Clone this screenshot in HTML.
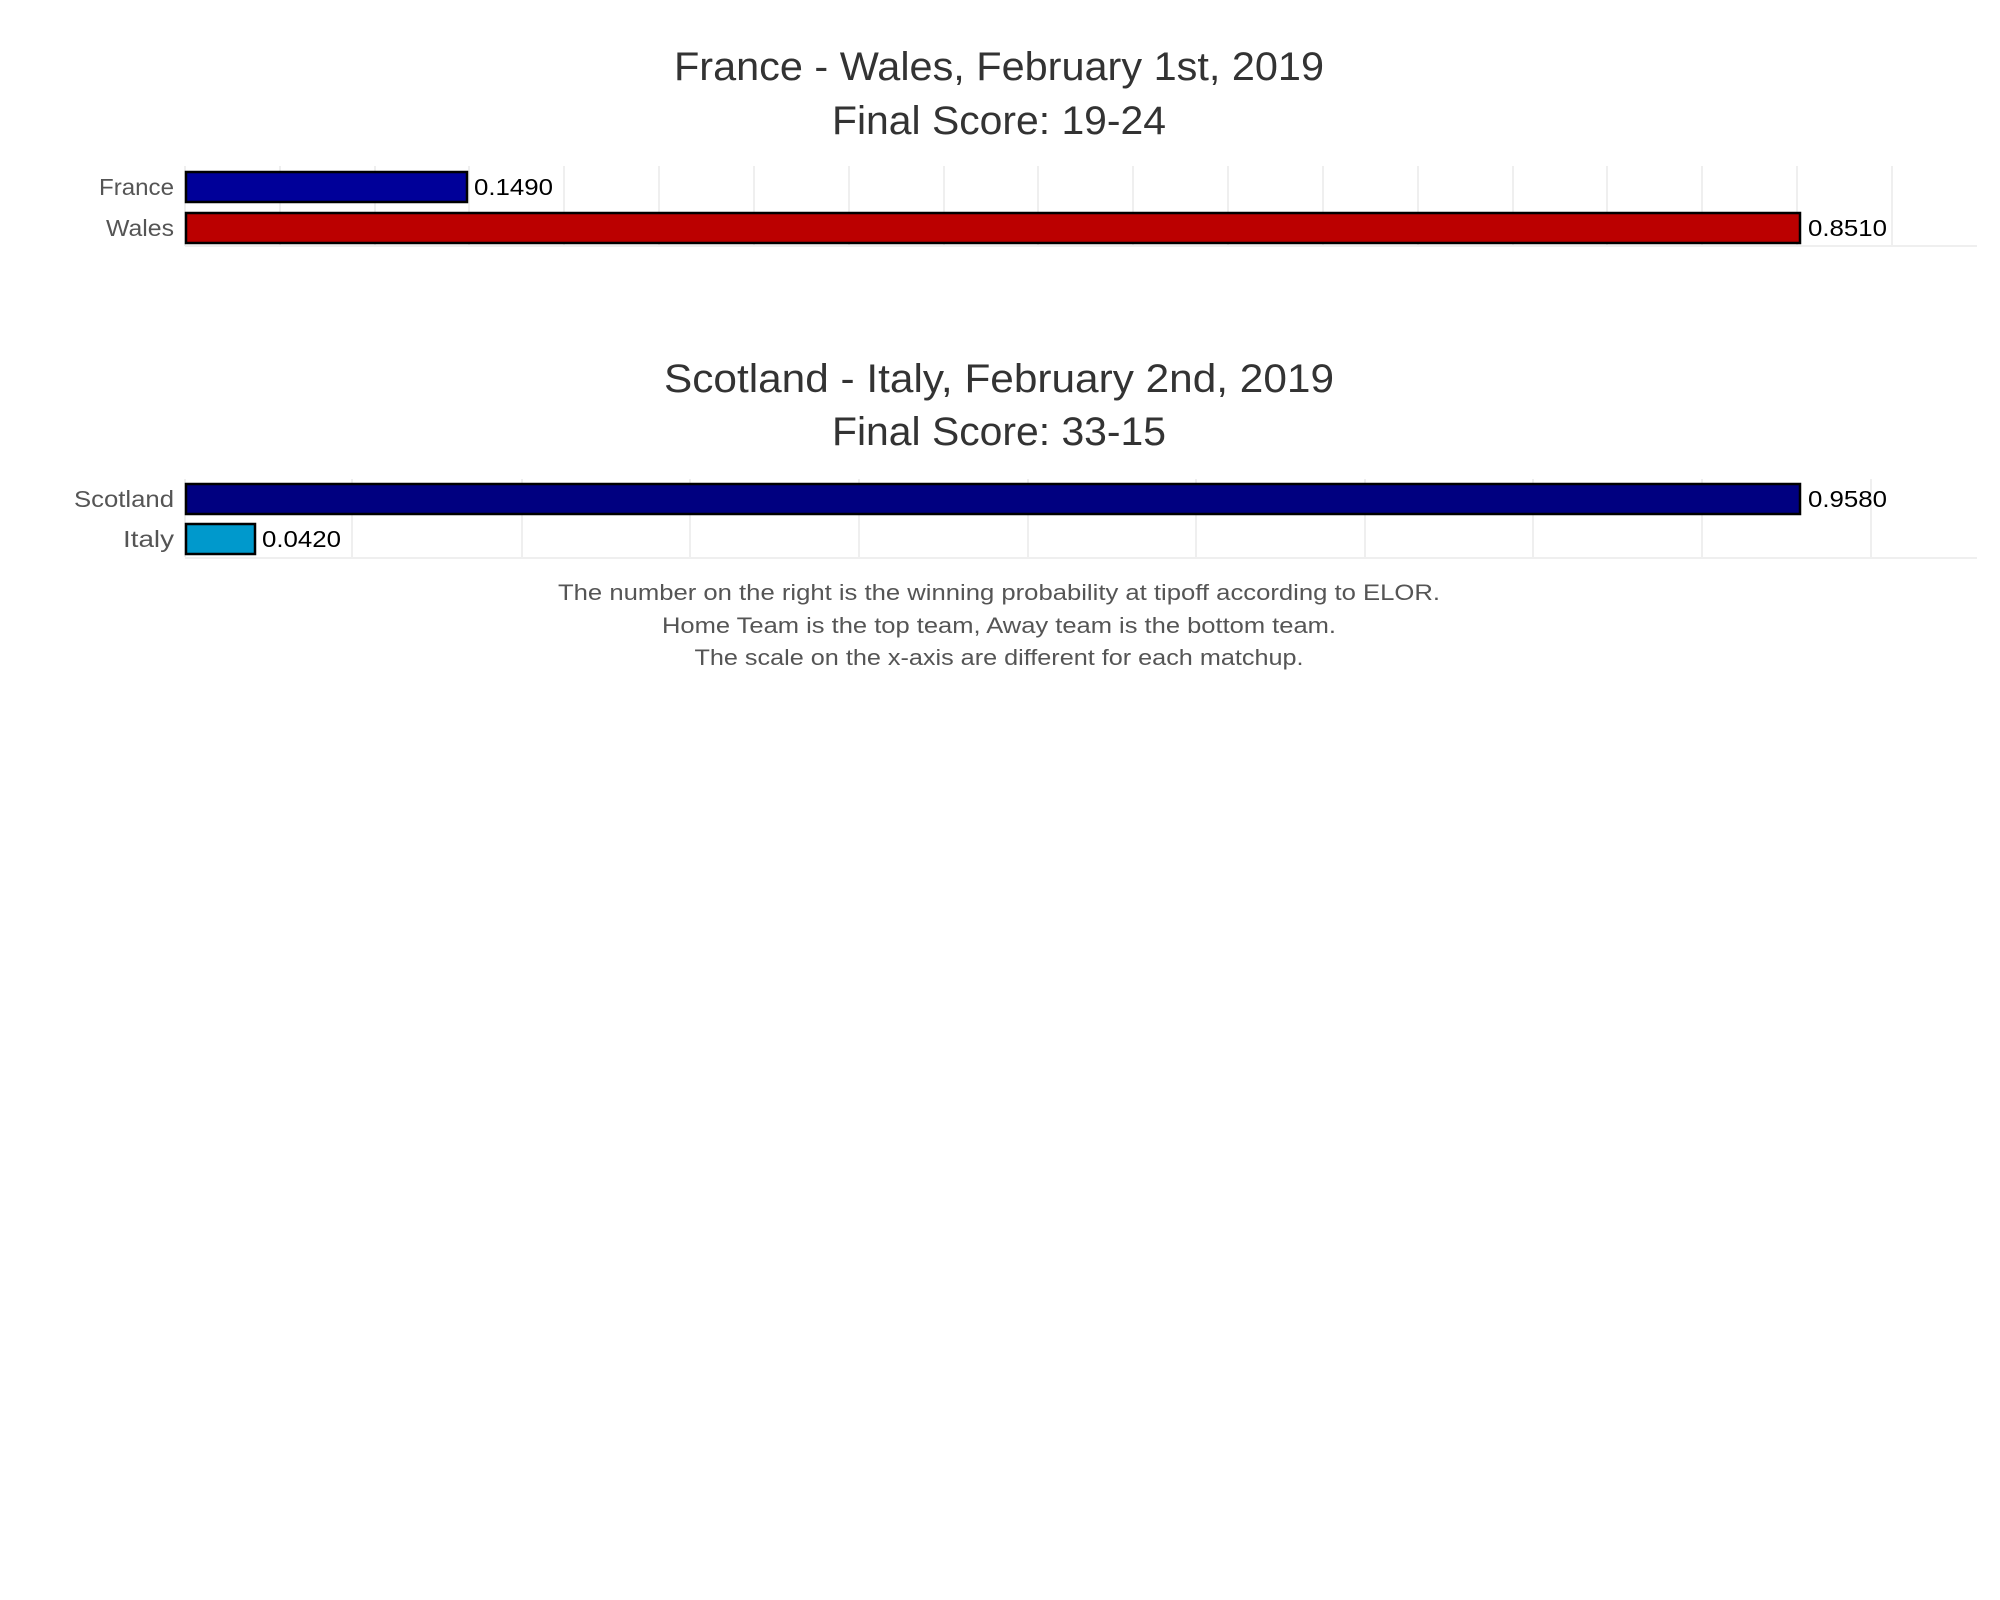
<!DOCTYPE html>
<html><head><meta charset="utf-8"><style>html,body{margin:0;padding:0;background:#fff}svg{display:block}</style></head>
<body>
<svg width="2000" height="1600" xmlns="http://www.w3.org/2000/svg" font-family="Liberation Sans, sans-serif">
<g fill="#333" font-size="40" text-anchor="middle">
<text x="999" y="80" textLength="650" lengthAdjust="spacingAndGlyphs">France - Wales, February 1st, 2019</text>
<text x="999" y="134" textLength="334" lengthAdjust="spacingAndGlyphs">Final Score: 19-24</text>
<text x="999" y="392" textLength="670" lengthAdjust="spacingAndGlyphs">Scotland - Italy, February 2nd, 2019</text>
<text x="999" y="445" textLength="334" lengthAdjust="spacingAndGlyphs">Final Score: 33-15</text>
</g>
<g stroke="#efefef" stroke-width="2">
<line x1="185" y1="166" x2="185" y2="246"/><line x1="280" y1="166" x2="280" y2="246"/><line x1="375" y1="166" x2="375" y2="246"/><line x1="469" y1="166" x2="469" y2="246"/><line x1="564" y1="166" x2="564" y2="246"/><line x1="659" y1="166" x2="659" y2="246"/><line x1="754" y1="166" x2="754" y2="246"/><line x1="849" y1="166" x2="849" y2="246"/><line x1="944" y1="166" x2="944" y2="246"/><line x1="1038" y1="166" x2="1038" y2="246"/><line x1="1133" y1="166" x2="1133" y2="246"/><line x1="1228" y1="166" x2="1228" y2="246"/><line x1="1323" y1="166" x2="1323" y2="246"/><line x1="1418" y1="166" x2="1418" y2="246"/><line x1="1513" y1="166" x2="1513" y2="246"/><line x1="1607" y1="166" x2="1607" y2="246"/><line x1="1702" y1="166" x2="1702" y2="246"/><line x1="1797" y1="166" x2="1797" y2="246"/><line x1="1892" y1="166" x2="1892" y2="246"/>
<line x1="185" y1="246" x2="1977" y2="246"/>
<line x1="185" y1="479" x2="185" y2="557"/><line x1="352" y1="479" x2="352" y2="557"/><line x1="522" y1="479" x2="522" y2="557"/><line x1="690" y1="479" x2="690" y2="557"/><line x1="859" y1="479" x2="859" y2="557"/><line x1="1028" y1="479" x2="1028" y2="557"/><line x1="1196" y1="479" x2="1196" y2="557"/><line x1="1365" y1="479" x2="1365" y2="557"/><line x1="1533" y1="479" x2="1533" y2="557"/><line x1="1702" y1="479" x2="1702" y2="557"/><line x1="1871" y1="479" x2="1871" y2="557"/>
<line x1="185" y1="558" x2="1977" y2="558"/>
</g>
<g stroke="#000" stroke-width="2.5">
<rect x="186" y="172" width="281" height="30" fill="#000099"/>
<rect x="186" y="213" width="1614" height="30" fill="#bb0000"/>
<rect x="186" y="484" width="1614" height="30" fill="#000080"/>
<rect x="186" y="524" width="69" height="30" fill="#0099cc"/>
</g>
<g fill="#555" font-size="23" text-anchor="end">
<text x="174" y="195" textLength="75" lengthAdjust="spacingAndGlyphs">France</text>
<text x="174" y="236" textLength="68" lengthAdjust="spacingAndGlyphs">Wales</text>
<text x="174" y="507" textLength="100" lengthAdjust="spacingAndGlyphs">Scotland</text>
<text x="174" y="547" textLength="51" lengthAdjust="spacingAndGlyphs">Italy</text>
</g>
<g fill="#000" font-size="23">
<text x="474" y="195" textLength="79" lengthAdjust="spacingAndGlyphs">0.1490</text>
<text x="1808" y="236" textLength="79" lengthAdjust="spacingAndGlyphs">0.8510</text>
<text x="1808" y="507" textLength="79" lengthAdjust="spacingAndGlyphs">0.9580</text>
<text x="262" y="547" textLength="79" lengthAdjust="spacingAndGlyphs">0.0420</text>
</g>
<g fill="#555" font-size="22" text-anchor="middle">
<text x="999" y="600" textLength="882" lengthAdjust="spacingAndGlyphs">The number on the right is the winning probability at tipoff according to ELOR.</text>
<text x="999" y="633" textLength="674" lengthAdjust="spacingAndGlyphs">Home Team is the top team, Away team is the bottom team.</text>
<text x="999" y="665" textLength="609" lengthAdjust="spacingAndGlyphs">The scale on the x-axis are different for each matchup.</text>
</g>
</svg>
</body></html>
